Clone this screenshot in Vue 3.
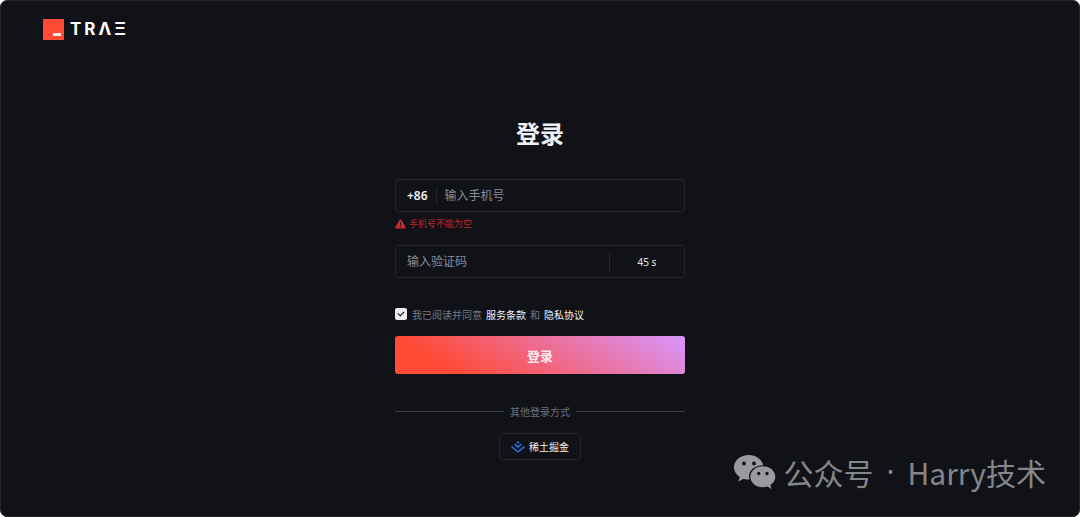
<script setup>
import { ref } from 'vue'

const phone = ref('')
const code = ref('')
const agreed = ref(true)
const seconds = ref(45)
</script>

<template>
  <div class="page">
    <header class="header">
      <a class="brand" href="#" aria-label="TRAE">
        <svg class="brand-mark" viewBox="0 0 21 21" aria-hidden="true">
          <rect width="21" height="21" fill="#ff4a36" />
          <rect x="10" y="14" width="8" height="3" fill="#ffe9e4" />
        </svg>
        <span class="wordmark"><span>T</span><span>R</span><span>Λ</span><span>Ξ</span></span>
      </a>
    </header>

    <main class="login">
      <h1>登录</h1>
      <form @submit.prevent>
        <div class="field">
          <label class="prefix" for="phone">+86</label>
          <input id="phone" v-model="phone" type="tel" placeholder="输入手机号" aria-describedby="phone-error" />
        </div>
        <p id="phone-error" class="error">
          <svg viewBox="0 0 12 11" aria-hidden="true">
            <path d="M5.1.8a1 1 0 0 1 1.8 0l4.7 8.2a1 1 0 0 1-.9 1.5H1.300a1 1 0 0 1-.9-1.500z" fill="#cf2a30" />
            <path d="M6 3.500v3.600M6 8.200v1.200" stroke="#111217" stroke-width="1.100" />
          </svg>
          手机号不能为空
        </p>
        <div class="field">
          <input id="code" v-model="code" type="text" placeholder="输入验证码" aria-label="输入验证码" />
          <button class="countdown" type="button">{{ seconds }} s</button>
        </div>
        <div class="agree">
          <input id="agree" v-model="agreed" type="checkbox" />
          <label for="agree">我已阅读并同意</label>
          <a href="#">服务条款</a>
          <span>和</span>
          <a href="#">隐私协议</a>
        </div>
        <button class="submit" type="submit">登录</button>
      </form>

      <div class="divider">其他登录方式</div>
      <button class="juejin" type="button">
        <svg viewBox="0 0 14 12" aria-hidden="true">
          <path d="M7 .2 8.700 1.500 7 2.800 5.300 1.500z" fill="#1e80ff" />
          <path d="M3.600 3.200 7 5.900l3.400-2.700M.500 5.600 7 10.800l6.500-5.200" fill="none" stroke="#1e74e6" stroke-width="1.600" />
        </svg>
        稀土掘金
      </button>
    </main>

    <div class="watermark">
      <svg viewBox="0 0 42 34" aria-hidden="true">
        <path d="M15 0C6.700 0 0 5.400 0 12.300c0 4 2.200 7.400 5.700 9.700L4.400 26.400l5.200-2.700c1.900.6 3.700.9 6 .9A11 11 0 0 1 15 21.500c0-6.200 5.800-11.200 13.800-11.200h.5C28 4.300 22 0 15 0z" fill="#999a9d" />
        <path d="M28.800 11.300c-6.900 0-12.500 4.700-12.500 10.500s5.600 10.500 12.500 10.500c1.600 0 3.100-.2 4.500-.7l4.200 2.300-1.100-3.900c3-1.900 4.900-4.800 4.900-8.200 0-5.800-5.600-10.500-12.500-10.500z" fill="#999a9d" />
        <circle cx="10" cy="8.500" r="1.900" fill="#111217" />
        <circle cx="20" cy="8.500" r="1.900" fill="#111217" />
        <circle cx="24.700" cy="18.500" r="1.700" fill="#111217" />
        <circle cx="33" cy="18.500" r="1.700" fill="#111217" />
      </svg>
      <span>公众号</span><span class="dot">·</span><span>Harry技术</span>
    </div>
  </div>
</template>

<style>
body {
  margin: 0;
  background: #fff;
}
</style>

<style scoped>
.page {
  box-sizing: border-box;
  position: relative;
  min-height: 100vh;
  border: 1px solid #222429;
  border-radius: 7px;
  background: #111217;
  color: #f0f1f5;
  font-family: "Noto Sans", "Noto Sans CJK SC", sans-serif;
  font-size: 10px;
}
.header {
  padding: 18px 42px 0;
}
.brand {
  display: inline-flex;
  align-items: center;
  gap: 6px;
  height: 21px;
  color: #fff;
  text-decoration: none;
}
.brand-mark {
  width: 21px;
  height: 21px;
}
.wordmark {
  display: flex;
  gap: 3px;
  font: 700 17px/21px Inter, sans-serif;
}
.login {
  display: flex;
  flex-direction: column;
  align-items: center;
  width: 290px;
  max-width: 90%;
  margin: 0 auto;
  padding-top: 72px;
}
h1 {
  margin: 0;
  font: 700 24px/36px "Noto Sans CJK SC", sans-serif;
}
form {
  width: 100%;
  margin-top: 28px;
}
input,
button {
  font-family: inherit;
}
.field {
  box-sizing: border-box;
  display: flex;
  align-items: center;
  height: 33px;
  border: 1px solid #24262b;
  border-radius: 3px;
}
.prefix {
  padding: 0 8px 0 11px;
  border-right: 1px solid #24262b;
  font-size: 12px;
  font-weight: 600;
  line-height: 18px;
}
.field input {
  flex: 1;
  min-width: 0;
  padding: 0 11px;
  border: 0;
  outline: 0;
  background: transparent;
  color: #f0f1f5;
  font-size: 12px;
}
.prefix + input {
  padding-left: 8px;
}
.field input::placeholder {
  color: #858e9c;
  opacity: 1;
}
.countdown {
  width: 75px;
  height: 18px;
  padding: 0;
  border: 0;
  border-left: 1px solid #24262b;
  background: transparent;
  color: #e6e7eb;
  font-size: 10px;
}
.error {
  display: flex;
  align-items: center;
  gap: 3px;
  height: 23px;
  margin: 0 0 10px;
  color: #bd242b;
  font-size: 9px;
}
.error svg {
  width: 11px;
  height: 10px;
}
.agree {
  display: flex;
  align-items: center;
  gap: 4px;
  height: 16px;
  margin-top: 28px;
  color: #777980;
}
.agree input {
  appearance: none;
  position: relative;
  width: 12px;
  height: 12px;
  margin: 0 1px 0 0;
  border-radius: 2px;
  background: #ededee;
}
.agree input:checked::after {
  content: "";
  position: absolute;
  top: 2px;
  left: 4px;
  width: 3px;
  height: 5px;
  border: solid #111217;
  border-width: 0 1px 1px 0;
  transform: rotate(45deg);
}
.agree a {
  color: #f0f1f5;
  text-decoration: none;
}
.submit {
  display: block;
  width: 100%;
  height: 38px;
  margin-top: 14px;
  padding: 0;
  border: 0;
  border-radius: 3px;
  background: linear-gradient(32deg, #ff4a36 18%, #d896ff 100%);
  color: #ffecef;
  font-size: 13px;
  font-weight: 700;
}
.divider {
  display: flex;
  align-items: center;
  gap: 6px;
  width: 100%;
  height: 16px;
  margin-top: 29px;
  color: #6d6f76;
}
.divider::before,
.divider::after {
  content: "";
  flex: 1;
  height: 1px;
  background: #3c3e44;
}
.juejin {
  display: flex;
  align-items: center;
  gap: 4px;
  height: 27px;
  margin-top: 14px;
  padding: 0 11px;
  border: 1px solid #24262b;
  border-radius: 3px;
  background: transparent;
  color: #f0f1f5;
  font-size: 10px;
}
.juejin svg {
  width: 14px;
  height: 12px;
}
.watermark {
  position: absolute;
  right: 33px;
  bottom: 22px;
  display: flex;
  align-items: center;
  color: #85868a;
  font: 400 30px/44px "Noto Sans CJK SC", sans-serif;
}
.watermark svg {
  width: 42px;
  height: 34px;
  margin-right: 7px;
}
.dot {
  width: 34px;
  font-family: "Noto Sans", sans-serif;
  text-align: center;
}
</style>
